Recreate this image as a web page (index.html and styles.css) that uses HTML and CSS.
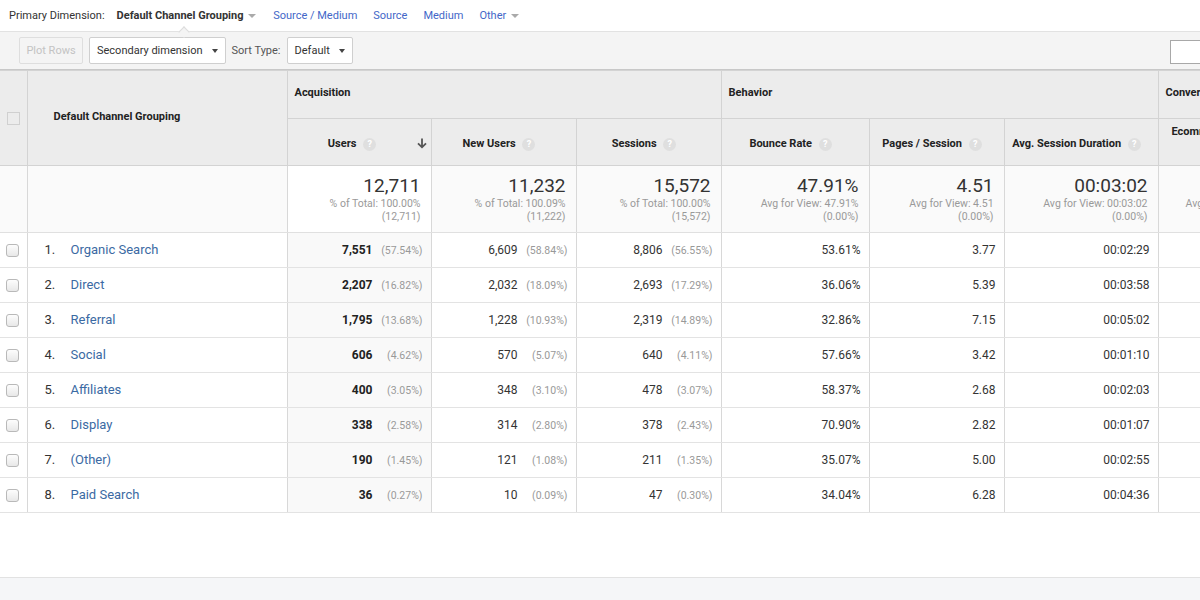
FILE: index.html
```html
<!DOCTYPE html>
<html>
<head>
<meta charset="utf-8">
<link rel="stylesheet" href="styles.css">
</head>
<body>
<div class="page">
  <div class="dimbar">
    <span class="dimlabel">Primary Dimension:</span>
    <span class="dimsel">Default Channel Grouping <span class="caret"></span><span class="notch"></span></span>
    <a class="dimlink">Source / Medium</a>
    <a class="dimlink">Source</a>
    <a class="dimlink">Medium</a>
    <a class="dimlink">Other <span class="caret"></span></a>
  </div>
  <div class="toolbar">
    <button class="btn disabled">Plot Rows</button>
    <button class="btn drop">Secondary dimension <span class="dcaret"></span></button>
    <span class="sortlabel">Sort Type:</span>
    <button class="btn drop">Default <span class="dcaret"></span></button>
    <span class="spacer"></span>
    <span class="search"></span>
  </div>
  <div class="tablewrap">
    <table class="report">
      <colgroup>
        <col class="c-check"><col class="c-dim"><col class="c-users"><col class="c-new"><col class="c-sess"><col class="c-bounce"><col class="c-pages"><col class="c-dur"><col class="c-conv">
      </colgroup>
      <thead>
        <tr class="h1">
          <th rowspan="2" class="hcheck"><span class="cb hcb"></span></th>
          <th rowspan="2" class="hdim">Default Channel Grouping</th>
          <th colspan="3" class="group">Acquisition</th>
          <th colspan="3" class="group">Behavior</th>
          <th class="group">Conversions</th>
        </tr>
        <tr class="h2">
          <th class="metric sorted"><span class="mlabel">Users <span class="q">?</span></span><svg class="arrow" viewBox="0 0 12 12" width="12" height="12"><path d="M6 1.5v8.5M2 6.3l4 4 4-4" fill="none" stroke="#555" stroke-width="1.8"/></svg></th>
          <th class="metric"><span class="mlabel">New Users <span class="q">?</span></span></th>
          <th class="metric"><span class="mlabel">Sessions <span class="q">?</span></span></th>
          <th class="metric"><span class="mlabel">Bounce Rate <span class="q">?</span></span></th>
          <th class="metric"><span class="mlabel">Pages / Session <span class="q">?</span></span></th>
          <th class="metric"><span class="mlabel">Avg. Session Duration <span class="q">?</span></span></th>
          <th class="metric conv"><span class="mlabel">Ecommerce Conversion Rate</span></th>
        </tr>
      </thead>
      <tbody>
        <tr class="totals">
          <td class="tcheck"></td>
          <td class="tdim"></td>
          <td class="tot sorted"><div class="big">12,711</div><div class="sub">% of Total: 100.00%</div><div class="sub">(12,711)</div></td>
          <td class="tot"><div class="big">11,232</div><div class="sub">% of Total: 100.09%</div><div class="sub">(11,222)</div></td>
          <td class="tot"><div class="big">15,572</div><div class="sub">% of Total: 100.00%</div><div class="sub">(15,572)</div></td>
          <td class="tot"><div class="big">47.91%</div><div class="sub">Avg for View: 47.91%</div><div class="sub">(0.00%)</div></td>
          <td class="tot"><div class="big">4.51</div><div class="sub">Avg for View: 4.51</div><div class="sub">(0.00%)</div></td>
          <td class="tot"><div class="big">00:03:02</div><div class="sub">Avg for View: 00:03:02</div><div class="sub">(0.00%)</div></td>
          <td class="tot conv"><div class="big">&nbsp;</div><div class="sub">Avg for View: 0.00%</div><div class="sub">&nbsp;</div></td>
        </tr>
        <tr>
          <td class="check"><span class="cb"></span></td>
          <td class="dim"><span class="idx">1.</span><a class="name">Organic Search</a></td>
          <td class="num sorted"><b>7,551</b><span class="pct">(57.54%)</span></td>
          <td class="num">6,609<span class="pct">(58.84%)</span></td>
          <td class="num">8,806<span class="pct">(56.55%)</span></td>
          <td class="num">53.61%</td>
          <td class="num">3.77</td>
          <td class="num">00:02:29</td>
          <td class="num conv"></td>
        </tr>
        <tr>
          <td class="check"><span class="cb"></span></td>
          <td class="dim"><span class="idx">2.</span><a class="name">Direct</a></td>
          <td class="num sorted"><b>2,207</b><span class="pct">(16.82%)</span></td>
          <td class="num">2,032<span class="pct">(18.09%)</span></td>
          <td class="num">2,693<span class="pct">(17.29%)</span></td>
          <td class="num">36.06%</td>
          <td class="num">5.39</td>
          <td class="num">00:03:58</td>
          <td class="num conv"></td>
        </tr>
        <tr>
          <td class="check"><span class="cb"></span></td>
          <td class="dim"><span class="idx">3.</span><a class="name">Referral</a></td>
          <td class="num sorted"><b>1,795</b><span class="pct">(13.68%)</span></td>
          <td class="num">1,228<span class="pct">(10.93%)</span></td>
          <td class="num">2,319<span class="pct">(14.89%)</span></td>
          <td class="num">32.86%</td>
          <td class="num">7.15</td>
          <td class="num">00:05:02</td>
          <td class="num conv"></td>
        </tr>
        <tr>
          <td class="check"><span class="cb"></span></td>
          <td class="dim"><span class="idx">4.</span><a class="name">Social</a></td>
          <td class="num sorted"><b>606</b><span class="pct">(4.62%)</span></td>
          <td class="num">570<span class="pct">(5.07%)</span></td>
          <td class="num">640<span class="pct">(4.11%)</span></td>
          <td class="num">57.66%</td>
          <td class="num">3.42</td>
          <td class="num">00:01:10</td>
          <td class="num conv"></td>
        </tr>
        <tr>
          <td class="check"><span class="cb"></span></td>
          <td class="dim"><span class="idx">5.</span><a class="name">Affiliates</a></td>
          <td class="num sorted"><b>400</b><span class="pct">(3.05%)</span></td>
          <td class="num">348<span class="pct">(3.10%)</span></td>
          <td class="num">478<span class="pct">(3.07%)</span></td>
          <td class="num">58.37%</td>
          <td class="num">2.68</td>
          <td class="num">00:02:03</td>
          <td class="num conv"></td>
        </tr>
        <tr>
          <td class="check"><span class="cb"></span></td>
          <td class="dim"><span class="idx">6.</span><a class="name">Display</a></td>
          <td class="num sorted"><b>338</b><span class="pct">(2.58%)</span></td>
          <td class="num">314<span class="pct">(2.80%)</span></td>
          <td class="num">378<span class="pct">(2.43%)</span></td>
          <td class="num">70.90%</td>
          <td class="num">2.82</td>
          <td class="num">00:01:07</td>
          <td class="num conv"></td>
        </tr>
        <tr>
          <td class="check"><span class="cb"></span></td>
          <td class="dim"><span class="idx">7.</span><a class="name">(Other)</a></td>
          <td class="num sorted"><b>190</b><span class="pct">(1.45%)</span></td>
          <td class="num">121<span class="pct">(1.08%)</span></td>
          <td class="num">211<span class="pct">(1.35%)</span></td>
          <td class="num">35.07%</td>
          <td class="num">5.00</td>
          <td class="num">00:02:55</td>
          <td class="num conv"></td>
        </tr>
        <tr>
          <td class="check"><span class="cb"></span></td>
          <td class="dim"><span class="idx">8.</span><a class="name">Paid Search</a></td>
          <td class="num sorted"><b>36</b><span class="pct">(0.27%)</span></td>
          <td class="num">10<span class="pct">(0.09%)</span></td>
          <td class="num">47<span class="pct">(0.30%)</span></td>
          <td class="num">34.04%</td>
          <td class="num">6.28</td>
          <td class="num">00:04:36</td>
          <td class="num conv"></td>
        </tr>
      </tbody>
    </table>
  </div>
  <div class="blank"></div>
  <div class="footer"></div>
</div>
</body>
</html>
```

FILE: styles.css
```css
* { box-sizing: border-box; }
html, body { margin: 0; padding: 0; }
body {
  width: 1200px;
  height: 600px;
  overflow: hidden;
  background: #fff;
  font-family: Roboto, "Liberation Sans", Arial, sans-serif;
  color: #333;
}
.page { width: 1200px; height: 600px; display: flex; flex-direction: column; }

.dimbar {
  height: 31px;
  flex: none;
  display: flex;
  align-items: center;
  padding-left: 9px;
  font-size: 11px;
  color: #333;
}
.dimlabel { margin-right: 12px; }
.dimsel { font-weight: bold; color: #333; position: relative; margin-right: 17px; }
.dimlink { color: #4367c8; margin-right: 16px; }
.caret {
  display: inline-block;
  width: 0; height: 0;
  border-left: 4px solid transparent;
  border-right: 4px solid transparent;
  border-top: 4px solid #aaa;
  vertical-align: middle;
  margin-left: 2px;
}
.notch {
  position: absolute;
  left: 63px;
  top: 19px;
  width: 8px;
  height: 8px;
  background: #f4f4f4;
  border-top: 1px solid #dcdcdc;
  border-left: 1px solid #dcdcdc;
  transform: rotate(45deg);
}

.toolbar {
  height: 38px;
  flex: none;
  background: #f4f4f4;
  border-top: 1px solid #e2e2e2;
  display: flex;
  align-items: center;
  padding-left: 19px;
  font-size: 11px;
}
.btn {
  font-family: inherit;
  font-size: 11px;
  height: 27px;
  background: #fff;
  border: 1px solid #cfcfcf;
  border-radius: 2px;
  color: #333;
  padding: 0 7px;
  display: flex;
  align-items: center;
  margin-right: 6px;
}
.btn.disabled {
  background: #f4f4f4;
  color: #c3c3c3;
  border-color: #dedede;
  width: 64px;
  justify-content: center;
  padding: 0;
}
.btn.drop .dcaret {
  display: inline-block;
  width: 0; height: 0;
  border-left: 3.5px solid transparent;
  border-right: 3.5px solid transparent;
  border-top: 4px solid #444;
  margin-left: 9px;
}
.sortlabel { color: #555; margin-right: 6px; }
.spacer { flex: 1; }
.search {
  width: 30px;
  height: 24px;
  background: #fff;
  border: 1px solid #a8a8a8;
  border-right: none;
  margin-top: 2px;
}

.tablewrap { width: 1200px; flex: none; overflow: hidden; border-top: 1px solid #c8c8c8; }
.report {
  border-collapse: collapse;
  table-layout: fixed;
  width: 1288px;
}
.c-check { width: 27px; }
.c-dim { width: 260px; }
.c-users { width: 144px; }
.c-new { width: 145px; }
.c-sess { width: 145px; }
.c-bounce { width: 148px; }
.c-pages { width: 135px; }
.c-dur { width: 154px; }
.c-conv { width: 130px; }

.report th {
  background: #ececec;
  font-size: 11px;
  font-weight: bold;
  color: #222;
  border: 1px solid #d3d3d3;
  padding: 0;
}
.report tr.h1 th { height: 48px; }
.report tr.h2 th { height: 47px; }
.report th:first-child { border-left: none; }
.hcheck { text-align: left; padding-left: 7px !important; vertical-align: middle; }
.hdim { text-align: left; padding-left: 26px !important; padding-bottom: 4px !important; }
.group { text-align: left; padding-left: 7px !important; vertical-align: top; padding-top: 15px !important; }
.metric { position: relative; text-align: center; padding-top: 4px !important; padding-right: 9px !important; }
.metric.sorted .mlabel { margin-right: 5px; }
.metric.conv { text-align: left; padding-left: 13px !important; vertical-align: top; padding-top: 6px !important; }
.mlabel { white-space: nowrap; }
.q {
  display: inline-block;
  width: 13px;
  height: 13px;
  border-radius: 50%;
  background: #dfdfdf;
  color: #fff;
  font-size: 9px;
  line-height: 13px;
  text-align: center;
  margin-left: 4px;
  vertical-align: 0;
  font-weight: bold;
}
.arrow { position: absolute; right: 3px; top: 18px; }

.cb {
  display: inline-block;
  width: 13px;
  height: 13px;
  border: 1px solid #b9b9b9;
  border-radius: 3px;
  background: linear-gradient(#fdfdfd, #e8e8e8);
  vertical-align: middle;
}
.hcb { border-radius: 0; background: #ececec; border-color: #d0d0d0; }

.report td {
  border-left: 1px solid #d8d8d8;
  border-right: 1px solid #d8d8d8;
  border-bottom: 1px solid #e3e3e3;
  padding: 0;
  font-size: 12px;
  color: #222;
}
.report td:first-child { border-left: none; }

.totals td { height: 67px; background: #fafafa; vertical-align: top; border-bottom-color: #e0e0e0; }
.totals td.sorted { background: #fff; }
.tot { text-align: right; padding: 9px 10px 0 0 !important; white-space: nowrap; }
.big { font-size: 19px; color: #333; line-height: 22px; }
.sub { font-size: 10.5px; color: #999; line-height: 13px; }

.report tbody tr:not(.totals) td { height: 35px; vertical-align: middle; padding-bottom: 1px; }
.check { padding-left: 6px !important; }
.dim { padding-left: 17px !important; font-size: 13px !important; white-space: nowrap; }
.idx { display: inline-block; width: 26px; color: #333; }
.name { color: #3b6aa3; }
.num { text-align: right; padding-right: 8px !important; color: #333 !important; }
.num.sorted { background: #f9f9f9; }
.num b { color: #222; }
.pct {
  display: inline-block;
  width: 50px;
  text-align: right;
  font-size: 10.5px;
  color: #999;
}

.blank { height: 64px; flex: none; }
.footer { flex: 1; border-top: 1px solid #e2e2e2; background: #f5f6f8; }
```
